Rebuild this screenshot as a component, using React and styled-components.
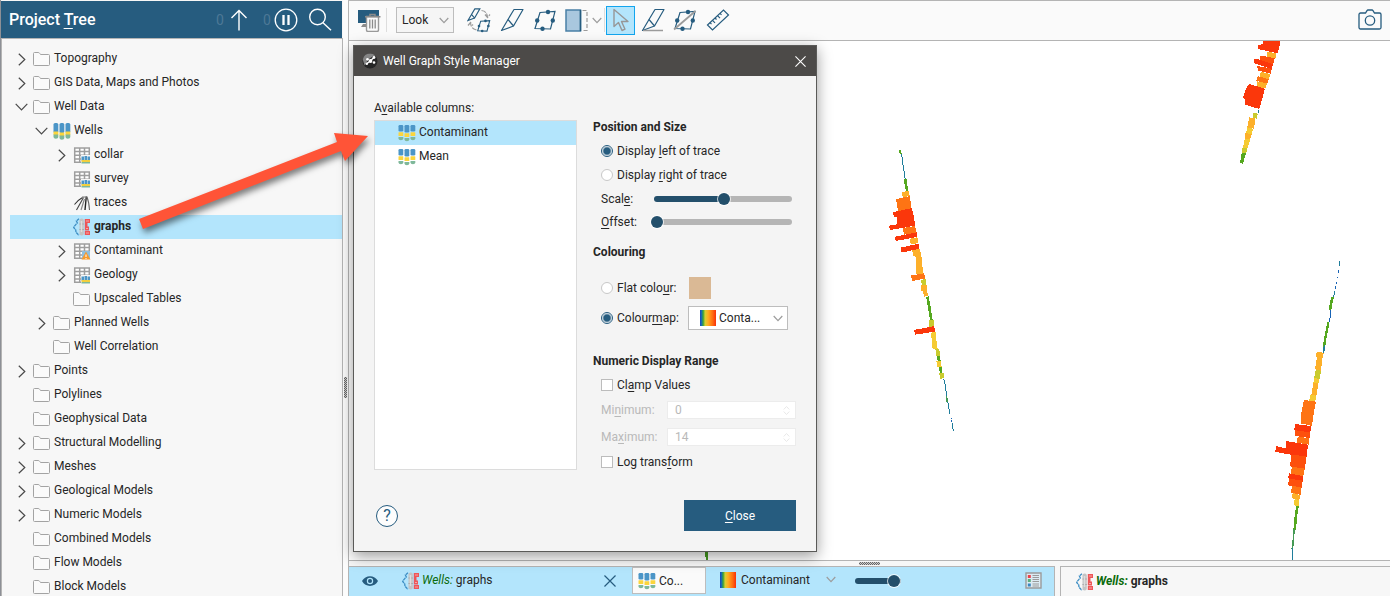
import React from "react";
import styled, { createGlobalStyle, css } from "styled-components";

const navy = "#265c7f";
const sky = "#b3e5fc";
const rule = "#b4b4b4";
const ink = "#262626";

const GlobalStyle = createGlobalStyle`
  * { box-sizing: border-box; }
  body {
    margin: 0;
    overflow: hidden;
    background: #f7f7f7;
    color: ${ink};
    font: 12px/16px Roboto, "Liberation Sans", sans-serif;
  }
  button, input, select { font: inherit; color: inherit; margin: 0; }
  button { padding: 0; border: 0; background: none; }
  u { text-decoration: underline; text-underline-offset: 2px; }
  svg { display: block; flex: none; }
`;

const Window = styled.div`
  position: relative;
  display: flex;
  height: 100vh;
  border-left: 1px solid #8d9096;
`;

/* ---------- project tree ---------- */

const Sidebar = styled.aside`
  flex: none;
  width: 342px;
  padding-top: 1px;
  display: flex;
  flex-direction: column;
`;

const SidebarHeader = styled.header`
  display: flex;
  align-items: center;
  flex: none;
  height: 37px;
  margin-right: 1px;
  padding: 0 10px 0 8px;
  background: ${navy};
  color: #fff;
`;

const SidebarTitle = styled.h1`
  flex: 1;
  margin: 0;
  font-size: 16px;
  line-height: 20px;
  font-weight: 500;
  u { text-underline-offset: 3px; }
`;

const HeaderCount = styled.span`
  width: 11px;
  color: #4d7896;
  font-size: 14px;
  margin-left: ${(p) => p.$gap || 0}px;
`;

const HeaderButton = styled.button`
  display: grid;
  place-items: center;
  height: 24px;
  width: 24px;
  margin-left: ${(p) => p.$gap || 0}px;
`;

const Tree = styled.ul`
  flex: 1;
  min-height: 0;
  margin: 0;
  padding: 8px 0 0 8px;
  list-style: none;
  overflow: hidden;
  background: #f7f7f7;
  border: solid ${rule};
  border-width: 1px 1px 0;
`;

const TreeRow = styled.li`
  display: flex;
  align-items: center;
  height: 24px;
  padding-left: ${(p) => p.$depth * 20}px;
  ${(p) => p.$selected && css`background: ${sky}; font-weight: 700;`}
`;

const Toggle = styled.button`
  flex: none;
  width: 23px;
  height: 24px;
  display: grid;
  place-items: center;
`;

const ToggleSpace = styled.span`
  flex: none;
  width: 23px;
`;

const RowIcon = styled.span`
  flex: none;
  width: 18px;
  margin-right: 3px;
`;

const RowLabel = styled.span`
  padding-bottom: 2px;
  white-space: nowrap;
`;

const Splitter = styled.div`
  flex: none;
  width: 5px;
  display: grid;
  align-content: end;
  justify-content: center;
  padding-bottom: 198px;
  background: #fcfcfc;
`;

const Grip = styled.div`
  width: ${(p) => (p.$vertical ? 3 : 21)}px;
  height: ${(p) => (p.$vertical ? 21 : 3)}px;
  background: repeating-conic-gradient(#666 0 25%, #ccc 0 50%) 0 0 / 2px 2px;
`;

/* ---------- main area ---------- */

const Main = styled.main`
  flex: 1;
  min-width: 0;
  display: flex;
  flex-direction: column;
  border: solid ${rule};
  border-width: 1px 0 0 1px;
`;

const Toolbar = styled.div`
  flex: none;
  display: flex;
  align-items: center;
  height: 40px;
  padding: 0 7px 1px 8px;
  background: #fafafa;
  border-bottom: 1px solid ${rule};
`;

const Tool = styled.button`
  display: grid;
  place-items: center;
  width: ${(p) => p.$width || 29}px;
  height: 29px;
  margin-left: ${(p) => p.$gap || 0}px;
  ${(p) => p.$active && css`background: ${sky}; border: 1px solid #12a5ee;`}
`;

const Divider = styled.span`
  width: 1px;
  height: 24px;
  margin-left: ${(p) => p.$gap || 0}px;
  background: #ddd;
`;

const Spacer = styled.span`
  flex: 1;
`;

const Picker = styled.span`
  display: flex;
  align-items: center;
  flex: none;
  width: ${(p) => p.$width}px;
  height: ${(p) => p.$height || 26}px;
  padding: ${(p) => p.$pad || "0 4px 0 5px"};
  margin-left: ${(p) => p.$gap || 0}px;
  background: ${(p) => p.$bg || "transparent"};
  border: ${(p) => (p.$plain ? "0" : "1px solid #bdbdbd")};
`;

const PickerSelect = styled.select`
  flex: 1;
  min-width: 0;
  height: 22px;
  padding: 0;
  appearance: none;
  border: 0;
  background: none;
  color: ${ink};
  text-align: left;
`;

const PickerField = styled(PickerSelect)`
  margin-left: ${(p) => p.$gap || 3}px;
`;

const Scene = styled.div`
  flex: 1;
  min-height: 0;
  overflow: hidden;
  background: #fff;
`;

const SceneDrawing = styled.svg`
  width: 100%;
  height: 100%;
`;

const BottomSplitter = styled.div`
  flex: none;
  height: 6px;
  border-top: 1px solid ${rule};
  display: grid;
  place-items: center;
`;

const BottomBar = styled.div`
  flex: none;
  display: flex;
  gap: 5px;
  height: 30px;
`;

const ShapeList = styled.div`
  flex: 1;
  min-width: 0;
  display: flex;
  align-items: center;
  padding: 0 12px 2px 12px;
  background: ${sky};
  border: solid ${rule};
  border-width: 1px 1px 0 0;
`;

const ShapeName = styled.span`
  width: ${(p) => p.$width || 186}px;
  padding: 0 0 2px 2px;
  i { color: #0b6b0b; }
`;

const Properties = styled.div`
  flex: none;
  width: 330px;
  display: flex;
  align-items: center;
  padding-left: 15px;
  background: #f7f7f7;
  font-weight: 700;
  border: solid ${rule};
  border-width: 1px 0 0 1px;
`;

const IconButton = styled.button`
  display: grid;
  place-items: center;
  flex: none;
  width: 18px;
  height: 20px;
  margin-left: ${(p) => p.$gap || 0}px;
`;

/* ---------- dialog ---------- */

const Dialog = styled.section`
  position: absolute;
  top: 45px;
  left: 352px;
  width: 464px;
  background: #f4f4f4;
  border: 1px solid #5a5a58;
  box-shadow: 0 4px 14px rgba(0, 0, 0, 0.4);
`;

const DialogBar = styled.header`
  display: flex;
  align-items: center;
  height: 30px;
  padding: 0 10px 0 8px;
  background: #4c4a48;
  color: #fff;
`;

const DialogTitle = styled.h2`
  flex: 1;
  margin: 0 0 0 5px;
  font-size: 12px;
  line-height: 16px;
  font-weight: 400;
`;

const DialogBody = styled.div`
  display: flex;
  gap: 16px;
  padding: 24px 20px 0;
`;

const ColumnsPane = styled.div`
  flex: none;
  width: 203px;
`;

const ColumnsLabel = styled.div`
  height: 20px;
`;

const ColumnList = styled.ul`
  height: 350px;
  margin: 0;
  padding: 0;
  list-style: none;
  background: #fff;
  border: 1px solid #dcdcdc;
`;

const ColumnItem = styled.li`
  display: flex;
  align-items: center;
  height: 24px;
  padding-left: 23px;
  background: ${(p) => (p.$selected ? sky : "transparent")};
`;

const StylePane = styled.div`
  flex: 1;
  padding-top: 15px;
`;

const Heading = styled.h3`
  margin: ${(p) => p.$gap || 0}px 0 0;
  font-size: 12px;
  line-height: 24px;
  font-weight: 700;
`;

const Field = styled.div`
  display: flex;
  align-items: center;
  height: ${(p) => p.$height || 24}px;
  margin-top: ${(p) => p.$gap || 0}px;
  padding-left: 8px;
  color: ${(p) => (p.$disabled ? "#b9b9b9" : ink)};
`;

const FieldLabel = styled.label`
  width: ${(p) => (p.$width ? `${p.$width}px` : "auto")};
`;

const Radio = styled.input.attrs({ type: "radio" })`
  appearance: none;
  flex: none;
  width: 12px;
  height: 12px;
  margin-right: 4px;
  border: 1px solid #c8c8c8;
  border-radius: 50%;
  background: #fff;
  &:checked {
    border-color: ${navy};
    background: radial-gradient(circle, ${navy} 0 3px, #fff 5px);
  }
`;

const Check = styled.input.attrs({ type: "checkbox" })`
  appearance: none;
  flex: none;
  width: 12px;
  height: 12px;
  margin-right: 4px;
  border: 1px solid #bcbcbc;
  background: #fff;
`;

const NumberBox = styled.div`
  display: flex;
  align-items: center;
  width: 129px;
  height: 18px;
  padding: 0 5px 0 7px;
  background: #fff;
  border: 1px solid #ececec;
`;

const NumberInput = styled.input`
  flex: 1;
  min-width: 0;
  padding: 0;
  border: 0;
  background: none;
  &:disabled { color: #b9b9b9; }
`;

const Swatch = styled.button`
  width: 22px;
  height: 22px;
  background: #dab995;
`;

const SliderBox = styled.span`
  position: relative;
  display: flex;
  align-items: center;
  width: ${(p) => p.$width}px;
  height: 16px;
  margin-left: ${(p) => p.$gap || 0}px;
  &::before {
    content: "";
    position: absolute;
    left: 3px;
    right: 0;
    height: 6px;
    border-radius: 3px;
    background: linear-gradient(90deg, #234f6b ${(p) => p.$fill}%, #b5b5b5 0);
  }
`;

const Slider = styled.input.attrs({ type: "range" })`
  position: relative;
  appearance: none;
  width: 100%;
  background: none;
  &::-webkit-slider-thumb {
    appearance: none;
    width: 12px;
    height: 12px;
    border-radius: 50%;
    background: #234f6b;
    box-shadow: 0 0 0 1px rgba(255, 255, 255, 0.75);
  }
`;

const DialogFooter = styled.footer`
  display: flex;
  align-items: center;
  justify-content: space-between;
  padding: 26px 20px 20px 22px;
`;

const CloseButton = styled.button`
  width: 112px;
  height: 31px;
  background: ${navy};
  color: #fff;
`;

const Arrow = styled.svg`
  position: absolute;
  left: 128px;
  top: 120px;
  pointer-events: none;
  filter: drop-shadow(2px 4px 3px rgba(0, 0, 0, 0.5));
`;

/* ---------- icons ---------- */

const Chevron = ({ open }) =>
  open ? (
    <svg width="13" height="8" viewBox="0 0 13 8" fill="none" stroke="#4a4a4a" strokeWidth="1.2">
      <path d="M.7.8 6.5 6.8 12.3.8" />
    </svg>
  ) : (
    <svg width="8" height="13" viewBox="0 0 8 13" fill="none" stroke="#4a4a4a" strokeWidth="1.2">
      <path d="M.8.7 6.8 6.5.8 12.3" />
    </svg>
  );

const DropMark = ({ color = "#9d9d9d" }) => (
  <svg width="10" height="7" viewBox="0 0 10 7" fill="none" stroke={color} strokeWidth="1.2">
    <path d="M.7 1 5 5.6 9.3 1" />
  </svg>
);

const FolderIcon = () => (
  <svg width="18" height="14" viewBox="0 0 18 14" fill="#fafafa" stroke="#a3a3a3">
    <path d="M.5 1.5a1 1 0 0 1 1-1h3.700c.8 0 1.200.4 1.600 1l.7 1h8a1 1 0 0 1 1 1v9a1 1 0 0 1-1 1h-14a1 1 0 0 1-1-1z" />
  </svg>
);

const WellsIcon = () => (
  <svg width="18" height="18" viewBox="0 0 18 18">
    {[0, 6, 12].map((x, i) => (
      <g key={x} transform={`translate(${x} ${i === 1 ? 1 : 0})`}>
        <rect x=".5" y={i === 1 ? 0 : 1} width="4.8" height="10" rx="1.6" fill="#4b95c7" />
        <path d="M.5 9.500h4.800v3.500h-4.800z" fill="#fbd53c" />
        <path d="M.5 12.500h4.800v2.500a2.400 1.700 0 0 1-4.800 0z" fill="#7fb89a" />
      </g>
    ))}
  </svg>
);

const ColumnIcon = () => (
  <svg width="18" height="18" viewBox="0 0 18 18">
    {[0, 6, 12].map((x, i) => (
      <g key={x} transform={`translate(${x} ${i === 1 ? 1 : 0})`}>
        <rect x=".5" y={i === 1 ? 0 : 1} width="4.800" height={i === 1 ? 7.5 : 6.5} rx="1.300" fill="#4b95c7" />
        <rect x=".5" y="8.300" width="4.800" height="3.700" rx=".5" fill="#fbd53c" />
        <path d="M.5 13h4.800v1.500a2.400 1.800 0 0 1-4.800 0z" fill="#7fb89a" />
      </g>
    ))}
  </svg>
);

const TableIcon = ({ warn }) => (
  <svg width="18" height="17" viewBox="-1 0 18 17">
    <path d="M.5.500h15v15H.500z" fill="#fff" />
    <path d="M0 1h16M0 4.500h16M0 8.300h16M0 12h8M0 15.300h8M.700.500v15.300M5.700.500v15.300M10.500.500v8M15.300.500v8" stroke="#9e9e9e" strokeWidth="1.500" fill="none" />
    {warn ? (
      <g>
        <path d="M8 8h8v8H8z" fill="#8ebfe0" />
        <path d="M12 8.500 16.500 16.500H7.500z" fill="#f79a2c" />
        <path d="M12 11.500v2.500M12 15v1" stroke="#fff" />
      </g>
    ) : (
      <g>
        <path d="M7 8h9.500v9H7z" fill="#f7f7f7" />
        <path d="M7.500 9.500H10v4H7.500zM10.500 9H13v4.500h-2.500zM13.500 9.500H16v4h-2.500z" fill="#4b95c7" />
        <path d="M7.500 13H16v2H7.500z" fill="#f3cf3d" />
        <path d="M7.500 15H16v1.500H7.500z" fill="#7fb89a" />
      </g>
    )}
  </svg>
);

const TracesIcon = () => (
  <svg width="18" height="15" viewBox="-1 0 18 15" fill="none">
    <path d="M8.500 1.500Q4 4 .5 8.500" stroke="#333" strokeWidth="1.100" />
    <path d="M9.500 1.500 2.500 14" stroke="#444" strokeWidth="1.100" />
    <path d="M10.500 3 7 14" stroke="#888" strokeWidth="1.200" />
    <path d="M12.300.500 11 14" stroke="#222" strokeWidth="1.400" />
    <path d="M13 1q2 5 2.500 13" stroke="#666" strokeWidth="1.100" />
    <path d="M8 1h5.500" stroke="#777" />
  </svg>
);

const GraphsIcon = () => (
  <svg width="18" height="18" viewBox="0 0 18 18">
    <path d="M6 .700 3.300 3l1 1.800L1.500 8l-.8 1.500 2 2.300.3 2.500 3 3" fill="none" stroke="#3d8ec4" strokeWidth="1.300" strokeDasharray="3 .5" />
    <rect x="6.500" y=".500" width="4.300" height="17" rx="2" fill="#c4c4c4" />
    <path d="M6.500 6h4.300M6.500 11.500h4.300" stroke="#999" strokeWidth=".8" />
    <path d="M8.500 3v11" stroke="#dedede" strokeWidth="1.500" />
    <path d="M11.800 1h5.200v4h-5.200zM11.800 5h2.700v3.500h-2.700zM11.800 8.500h4.200v4h-4.200zM11.800 13h5.200v4h-5.200z" fill="#ee5658" />
    <path d="M13 3h3M13 10.500h2M13 15h3" stroke="#f7a5a5" />
  </svg>
);

const MapSwatch = () => (
  <svg width="16" height="16" viewBox="0 0 16 16">
    <defs>
      <linearGradient id="rainbow">
        <stop offset="0" stopColor="#1242c8" />
        <stop offset=".1" stopColor="#1b6fa8" />
        <stop offset=".2" stopColor="#3fa535" />
        <stop offset=".32" stopColor="#d8cf35" />
        <stop offset=".5" stopColor="#ffad20" />
        <stop offset=".8" stopColor="#ff6a10" />
        <stop offset="1" stopColor="#f8300a" />
      </linearGradient>
    </defs>
    <path d="M0 0h16v16H0z" fill="url(#rainbow)" />
  </svg>
);

const UpIcon = () => (
  <svg width="18" height="22" viewBox="0 0 18 22" fill="none" stroke="#fff" strokeWidth="1.400">
    <path d="M9 21.500V1.500M1.500 9l7.500-7.500L16.500 9" />
  </svg>
);

const PauseIcon = () => (
  <svg width="24" height="24" viewBox="0 0 24 24" fill="none" stroke="#fff">
    <circle cx="12" cy="12" r="10.800" strokeWidth="1.300" />
    <path d="M9.500 7v10M14.500 7v10" strokeWidth="2.300" />
  </svg>
);

const SearchIcon = () => (
  <svg width="24" height="24" viewBox="0 0 24 24" fill="none" stroke="#fff" strokeWidth="1.400">
    <circle cx="9.500" cy="9" r="7.800" />
    <path d="m15 14.800 8 7.500" />
  </svg>
);

const ClearSceneIcon = () => (
  <svg width="24" height="24" viewBox="0 0 24 24" fill="none">
    <path d="M1 2h21v13H1z" fill={navy} />
    <path d="M6 16h6v3H4z" fill="#8b8b8b" />
    <path d="M9.500 8.500h12V22a1.500 1.500 0 0 1-1.500 1.500h-9A1.500 1.500 0 0 1 9.500 22z" fill="#fafafa" stroke="#999" strokeWidth="1.400" />
    <path d="M8 8.800h15.500M13 8.500V6.500h5v2" stroke="#8b8b8b" strokeWidth="1.500" />
    <path d="M12.800 11.500v9M15.500 11.500v9M18.200 11.500v9" stroke="#8b8b8b" strokeWidth="1.300" />
  </svg>
);

const BladeShape = () => (
  <path d="M14 1.500H23L13.500 18 8 11.500zM8 11.500 1.500 22.500 13.500 18" />
);

const SlicerIcon = () => (
  <svg width="24" height="24" viewBox="0 0 24 24" fill="none" stroke={navy} strokeWidth="1.200" strokeLinejoin="round">
    <BladeShape />
  </svg>
);

const SlicerLineIcon = () => (
  <svg width="24" height="24" viewBox="0 0 24 24" fill="none" stroke={navy} strokeWidth="1.200" strokeLinejoin="round">
    <BladeShape />
    <path d="M2 22.500h20" stroke="#9b9b9b" strokeWidth="1.500" />
  </svg>
);

const LoopShape = () => (
  <>
    <path d="M7 4.500 22 3.500 17.500 21 2 20.500z" />
    <g fill={navy} stroke="none">
      <circle cx="15" cy="4" r="2.200" />
      <circle cx="4.200" cy="12.500" r="2.200" />
      <circle cx="19.800" cy="12.500" r="2.200" />
      <circle cx="9.500" cy="20.800" r="2.200" />
    </g>
  </>
);

const LoopIcon = ({ struck }) => (
  <svg width="24" height="24" viewBox="0 0 24 24" fill="none" stroke={navy} strokeWidth="1.200">
    <LoopShape />
    {struck && <path d="M1 21.500 22.500 3" stroke="#9b9b9b" strokeWidth="1.800" />}
  </svg>
);

const SwapIcon = () => (
  <svg width="25" height="25" viewBox="0 0 25 25" fill="none" stroke={navy}>
    <g transform="scale(.56)" strokeWidth="2"><BladeShape /></g>
    <g transform="translate(9.500 10.500) scale(.6)" strokeWidth="1.800"><LoopShape /></g>
    <g stroke="#9b9b9b" strokeWidth="1.200">
      <path d="M14.500 2.500q5 .5 6 6M18 6.500l2.500 3 2.500-3" strokeDasharray="5 1" />
      <path d="M9.500 22c-4-1-5.500-3-6-7M1 17.500l2.500-3 2.500 3" strokeDasharray="5 1.500" />
    </g>
  </svg>
);

const SliceModeIcon = () => (
  <svg width="24" height="23" viewBox="0 0 24 23" fill="none">
    <path d="M1 1h14.500v21H1z" fill="#a9c7de" stroke="#4a80a6" strokeWidth="1.500" />
    <path d="M15.500 1v21" stroke={navy} strokeWidth="1.500" />
    <path d="M17.500 1.500h4.500v20h-4.500" stroke="#9b9b9b" strokeWidth="1.200" strokeDasharray="4 2" />
  </svg>
);

const PointerIcon = () => (
  <svg width="18" height="24" viewBox="0 0 18 24" fill="none" stroke="#979797" strokeWidth="1.400" strokeLinejoin="round">
    <path d="M2 1.500v17l4.500-4 3.500 8 3-1.300-3.500-7.700H16z" />
  </svg>
);

const RulerIcon = () => (
  <svg width="24" height="24" viewBox="0 0 24 24" fill="none" stroke={navy} strokeWidth="1.200">
    <path d="M1.500 17 17.500 2l5 5L6.500 22z" />
    <path d="m4 14.600 1.500 1.500M6.500 12.300l2.500 2.500M9 10l1.500 1.500M11.500 7.600l2.500 2.500M14 5.300l1.500 1.500" />
  </svg>
);

const CameraIcon = () => (
  <svg width="24" height="22" viewBox="0 0 24 22" fill="none" stroke={navy} strokeWidth="1.300">
    <path d="M2.500 4h5L9 1.700c.2-.400.500-.700 1-.700h4c.500 0 .800.300 1 .700L16.500 4h5c.800 0 1.500.700 1.500 1.500v13c0 .800-.700 1.500-1.500 1.500h-19C1.700 20 1 19.300 1 18.500v-13C1 4.700 1.700 4 2.500 4z" />
    <circle cx="12" cy="11.500" r="4.700" />
  </svg>
);

const AppIcon = () => (
  <svg width="16" height="16" viewBox="0 0 16 16">
    <circle cx="8" cy="8" r="7.500" fill="#262626" />
    <path d="M.8 6.500a7.500 7.500 0 0 1 12.500-4Q7 4 2.500 12.500Z" fill="#858585" />
    <path d="m5 10.500 2.500-2 4.500-4" stroke="#fff" strokeWidth="1.400" />
    <g fill="#fff">
      <circle cx="5.500" cy="6.300" r="1.300" />
      <circle cx="12" cy="4.500" r="1.400" />
      <circle cx="8.500" cy="8" r="1.900" />
      <circle cx="12" cy="9.500" r="1.300" />
      <circle cx="4.800" cy="10.800" r="1.300" />
    </g>
  </svg>
);

const CrossIcon = ({ color = "#fff", size = 10 }) => (
  <svg width={size} height={size} viewBox="0 0 10 10" fill="none" stroke={color}>
    <path d="m.4.400 9.200 9.200M9.600.400.400 9.600" />
  </svg>
);

const HelpRing = styled.button`
  width: 22px;
  height: 22px;
  border: 1px solid ${navy};
  border-radius: 50%;
  background: #fdfdfd;
  color: ${navy};
  font-size: 16px;
  line-height: 20px;
  text-align: center;
`;

const EyeIcon = () => (
  <svg width="16" height="12" viewBox="0 0 16 12">
    <path d="M0 6c3.500-6.500 12.500-6.500 16 0-3.500 6.500-12.500 6.500-16 0z" fill={navy} />
    <circle cx="8" cy="6" r="3.200" fill={sky} />
    <circle cx="8" cy="6" r="2" fill={navy} />
  </svg>
);

const LegendIcon = () => (
  <svg width="17" height="17" viewBox="0 0 17 17" fill="none">
    <path d="M1 1h15v15H1z" fill="#dcebf3" stroke="#9b9b9b" strokeWidth="1.400" />
    <path d="M2.800 3h3v3h-3z" fill="#ee4048" />
    <path d="M2.800 7h3v3h-3z" fill="#5cae7f" />
    <path d="M2.800 11.500h3v3h-3z" fill="#3a86c0" />
    <path d="M7.500 3.500H14M7.500 5.500H14M7.500 7.500H14M7.500 9.500H14M7.500 12H14M7.500 14H14" stroke="#9b9b9b" />
  </svg>
);

const SpinMark = () => (
  <svg width="7" height="9" viewBox="0 0 7 9" fill="none" stroke="#e8e8e8">
    <path d="m.7 3.500 2.800-3 2.800 3M.7 5.500l2.800 3 2.800-3" />
  </svg>
);

/* ---------- well traces ---------- */

const red = "#fb370b";
const flame = "#fd500d";
const orange = "#fe7414";
const amber = "#fdb02a";
const gold = "#f5cb33";
const lime = "#c9cb2e";
const green = "#55a81f";
const moss = "#459a55";
const teal = "#1f7d9b";
const blue = "#1763b5";

/* Each well: bars as [colour, points] and trace pieces as [colour, width, points], at three units to the pixel. */
const wells = [
  {
    origin: [860, 140],
    lines: [
      [green, 6, "119,30 122,42"],
      [teal, 3, "124,42 127,56 128,70 131,88 134,105 136,120"],
      [green, 8, "136,118 138,135 142,152"],
      [green, 8, "202,470 206,490 210,515 214,540"],
      [green, 8, "240,680 244,698"],
      [teal, 3, "251,716 257,740 259,768 264,790 270,822"],
      [moss, 5, "259,768 262,785"],
      [blue, 3, "274,834 274,837"],
      [blue, 3, "274,841 274,846"],
      [teal, 3, "277,850 278,866 281,872"],
    ],
    bars: [
      [amber, "126,157 146,152 149,168 128,172"],
      [orange, "108,178 149,168 155,206 114,213"],
      [red, "98,217 156,204 159,222 104,233"],
      [red, "110,230 160,220 164,256 112,262"],
      [red, "87,257 165,244 166,257 90,270"],
      [orange, "128,264 166,258 168,278 132,284"],
      [red, "105,290 170,277 171,291 107,303"],
      [amber, "149,296 172,292 175,310 152,312"],
      [amber, "156,330 179,326 184,345 188,385 168,390 167,350 160,348"],
      [red, "122,323 176,311 178,326 125,338"],
      [amber, "168,385 188,382 190,402 168,402"],
      [orange, "153,406 193,400 195,416 157,423"],
      [lime, "183,420 197,417 197,436 186,436"],
      [amber, "184,436 200,434 201,450 204,468 192,470 189,454 184,452"],
      [lime, "208,540 221,540 221,560 208,560"],
      [gold, "213,578 228,576 229,600 233,628 218,628"],
      [red, "162,570 223,558 225,575 165,584"],
      [lime, "226,628 238,628 240,650 230,650"],
      [green, "230,648 240,648 242,662 233,662"],
      [gold, "229,664 243,662 245,682 232,682"],
      [lime, "238,700 251,698 251,715 240,716"],
    ],
  },
  {
    origin: [1220, 0],
    lines: [[teal, 3, "116,330 116,338"]],
    bars: [
      [red, "128,120 180,120 180,135 172,160 114,147 114,137 128,131"],
      [amber, "141,155 169,160 166,178 142,170"],
      [flame, "122,166 164,175 160,192 119,182"],
      [flame, "112,198 156,206 152,221 113,211"],
      [red, "102,178 112,177 159,192 156,207 102,190"],
      [amber, "122,215 151,222 146,240 120,232"],
      [orange, "113,228 146,238 142,252 109,242"],
      [amber, "111,244 142,250 136,266 110,260"],
      [red, "88,252 135,266 127,295 118,327 75,314 76,300 69,292 80,262"],
      [lime, "100,339 114,341 110,356 98,354"],
      [amber, "88,352 106,355 102,386 82,382"],
      [gold, "82,382 99,386 96,402 78,400"],
      [amber, "75,399 95,402 91,416 75,416"],
      [gold, "74,416 91,416 83,445 69,445"],
      [lime, "67,445 82,445 79,460 66,460"],
      [green, "65,460 78,460 69,491 60,490"],
    ],
  },
  {
    origin: [1250, 250],
    lines: [
      [teal, 3, "269,33 269,48"],
      [blue, 3, "265,60 265,69"],
      [blue, 3, "262,81 262,84"],
      [blue, 3, "259,96 259,102"],
      [blue, 3, "256,108 256,117"],
      [teal, 3, "254,122 250,146"],
      [green, 8, "248,141 243,162 240,180"],
      [blue, 3, "243,180 241,200 238,215"],
      [green, 7, "235,215 231,240 226,265 222,290"],
      [teal, 4, "223,285 221,308"],
      [green, 8, "143,766 138,795 134,840"],
      [moss, 5, "132,838 130,870 127,896"],
      [teal, 3, "127,895 127,930"],
    ],
    bars: [
      [amber, "200,306 221,308 219,324 198,322"],
      [amber, "201,322 217,324 213,362 195,358"],
      [lime, "197,360 213,362 209,388 192,384"],
      [gold, "192,384 208,387 205,402 190,400"],
      [amber, "190,398 205,400 199,438 184,436"],
      [gold, "180,434 199,437 196,454 178,452"],
      [orange, "162,450 198,455 192,485 186,528 152,520 154,490 159,465"],
      [red, "136,522 184,528 181,547 132,541"],
      [flame, "136,541 181,547 179,564 135,558"],
      [orange, "143,561 178,564 176,584 140,578"],
      [red, "108,573 174,584 170,620 108,612 90,608 76,605 78,588 108,595"],
      [flame, "124,614 169,619 165,658 120,649"],
      [orange, "126,650 164,656 160,678 122,672"],
      [red, "117,670 159,678 158,692 114,685"],
      [flame, "117,686 158,692 155,713 114,706"],
      [orange, "126,708 154,712 152,735 123,728"],
      [amber, "128,729 150,735 148,750 126,745"],
      [gold, "134,747 148,750 146,769 132,766"],
    ],
  },
];

const WellScene = () => (
  <SceneDrawing viewBox="349 41 1041 519" preserveAspectRatio="xMinYMin slice" shapeRendering="crispEdges">
    {wells.map(({ origin, lines, bars }) => (
      <g key={origin[0]} transform={`translate(${origin[0]} ${origin[1]}) scale(.33333)`}>
        {lines.map(([stroke, width, points]) => (
          <polyline key={points} points={points} stroke={stroke} strokeWidth={width} fill="none" />
        ))}
        {bars.map(([fill, points]) => (
          <polygon key={points} points={points} fill={fill} />
        ))}
      </g>
    ))}
    <path d="M705 540h3v20h-2v-3h-1z" fill="#459a1f" />
  </SceneDrawing>
);

/* ---------- tree data: label, depth, expansion, icon ---------- */

const treeItems = [
  ["Topography", 0, "closed"],
  ["GIS Data, Maps and Photos", 0, "closed"],
  ["Well Data", 0, "open"],
  ["Wells", 1, "open", <WellsIcon />],
  ["collar", 2, "closed", <TableIcon />],
  ["survey", 2, null, <TableIcon />],
  ["traces", 2, null, <TracesIcon />],
  ["graphs", 2, null, <GraphsIcon />],
  ["Contaminant", 2, "closed", <TableIcon warn />],
  ["Geology", 2, "closed", <TableIcon />],
  ["Upscaled Tables", 2, null],
  ["Planned Wells", 1, "closed"],
  ["Well Correlation", 1, null],
  ["Points", 0, "closed"],
  ["Polylines", 0, null],
  ["Geophysical Data", 0, null],
  ["Structural Modelling", 0, "closed"],
  ["Meshes", 0, "closed"],
  ["Geological Models", 0, "closed"],
  ["Numeric Models", 0, "closed"],
  ["Combined Models", 0, null],
  ["Flow Models", 0, null],
  ["Block Models", 0, null],
];

const ProjectTree = () => (
  <Sidebar>
    <SidebarHeader>
      <SidebarTitle>Project <u>T</u>ree</SidebarTitle>
      <HeaderCount>0</HeaderCount>
      <HeaderButton aria-label="Uploads"><UpIcon /></HeaderButton>
      <HeaderCount $gap={12}>0</HeaderCount>
      <HeaderButton aria-label="Pause"><PauseIcon /></HeaderButton>
      <HeaderButton $gap={10} aria-label="Search"><SearchIcon /></HeaderButton>
    </SidebarHeader>
    <Tree>
      {treeItems.map(([label, depth, state, icon]) => (
        <TreeRow key={label} $depth={depth} $selected={label === "graphs"}>
          {state ? (
            <Toggle aria-label={`Toggle ${label}`}><Chevron open={state === "open"} /></Toggle>
          ) : (
            <ToggleSpace />
          )}
          <RowIcon>{icon || <FolderIcon />}</RowIcon>
          <RowLabel>{label}</RowLabel>
        </TreeRow>
      ))}
    </Tree>
  </Sidebar>
);

const SceneToolbar = () => (
  <Toolbar>
    <Tool $width={24} aria-label="Clear scene"><ClearSceneIcon /></Tool>
    <Divider $gap={5} />
    <Picker $width={58} $gap={9} $bg="#f5f5f5">
      <PickerSelect aria-label="Look"><option>Look</option></PickerSelect>
      <DropMark />
    </Picker>
    <Tool $gap={11} aria-label="Swap slicer"><SwapIcon /></Tool>
    <Tool $gap={3} aria-label="Slicer"><SlicerIcon /></Tool>
    <Tool $gap={4} aria-label="Polyline"><LoopIcon /></Tool>
    <Tool $gap={3} aria-label="Slice mode"><SliceModeIcon /></Tool>
    <Tool $width={12} aria-label="Slice options"><DropMark /></Tool>
    <Divider $gap={1} />
    <Tool $active $gap={1} aria-label="Select"><PointerIcon /></Tool>
    <Tool $gap={3} aria-label="Draw slicer line"><SlicerLineIcon /></Tool>
    <Tool $gap={3} aria-label="Draw polyline"><LoopIcon struck /></Tool>
    <Tool $gap={4} aria-label="Ruler"><RulerIcon /></Tool>
    <Spacer />
    <Tool $width={26} aria-label="Take screenshot"><CameraIcon /></Tool>
  </Toolbar>
);

const SceneFooter = () => (
  <BottomBar>
    <ShapeList>
      <IconButton aria-label="Visibility"><EyeIcon /></IconButton>
      <IconButton $gap={23} aria-label="Graphs"><GraphsIcon /></IconButton>
      <ShapeName $width={181}><i>Wells:</i> graphs</ShapeName>
      <IconButton aria-label="Remove"><CrossIcon color={navy} size={12} /></IconButton>
      <Picker $width={74} $height={27} $gap={13} $bg="#fafafa">
        <ColumnIcon />
        <PickerField as="button" aria-label="Column">Co...</PickerField>
      </Picker>
      <Picker $plain $width={116} $gap={14} $pad="0 0 2px 0">
        <MapSwatch />
        <PickerField $gap={5} aria-label="Colour map"><option>Contaminant</option></PickerField>
        <DropMark />
      </Picker>
      <SliderBox $width={49} $fill={100} $gap={16}>
        <Slider aria-label="Opacity" defaultValue={96} />
      </SliderBox>
      <Spacer />
      <IconButton aria-label="Legend"><LegendIcon /></IconButton>
    </ShapeList>
    <Properties>
      <GraphsIcon />
      <ShapeName><i>Wells:</i> graphs</ShapeName>
    </Properties>
  </BottomBar>
);

const StyleManager = () => (
  <Dialog role="dialog" aria-labelledby="dialog-title">
    <DialogBar>
      <AppIcon />
      <DialogTitle id="dialog-title">Well Graph Style Manager</DialogTitle>
      <button aria-label="Close dialog"><CrossIcon size={11} /></button>
    </DialogBar>
    <DialogBody>
      <ColumnsPane>
        <ColumnsLabel id="columns-label">A<u>v</u>ailable columns:</ColumnsLabel>
        <ColumnList aria-labelledby="columns-label">
          <ColumnItem $selected><RowIcon><ColumnIcon /></RowIcon><RowLabel>Contaminant</RowLabel></ColumnItem>
          <ColumnItem><RowIcon><ColumnIcon /></RowIcon><RowLabel>Mean</RowLabel></ColumnItem>
        </ColumnList>
      </ColumnsPane>
      <StylePane>
        <Heading>Position and Size</Heading>
        <Field>
          <Radio id="left" name="side" defaultChecked />
          <FieldLabel htmlFor="left">Display <u>l</u>eft of trace</FieldLabel>
        </Field>
        <Field>
          <Radio id="right" name="side" />
          <FieldLabel htmlFor="right">Display <u>r</u>ight of trace</FieldLabel>
        </Field>
        <Field $height={23}>
          <FieldLabel $width={50} htmlFor="scale">Scal<u>e</u>:</FieldLabel>
          <SliderBox $width={141} $fill={51}><Slider id="scale" defaultValue={52} /></SliderBox>
        </Field>
        <Field $height={23}>
          <FieldLabel $width={50} htmlFor="offset"><u>O</u>ffset:</FieldLabel>
          <SliderBox $width={141} $fill={0}><Slider id="offset" defaultValue={0} /></SliderBox>
        </Field>
        <Heading $gap={7}>Colouring</Heading>
        <Field $gap={12}>
          <Radio id="flat" name="colouring" />
          <FieldLabel $width={72} htmlFor="flat">Flat colo<u>u</u>r:</FieldLabel>
          <Swatch aria-label="Flat colour" />
        </Field>
        <Field $gap={6}>
          <Radio id="map" name="colouring" defaultChecked />
          <FieldLabel $width={71} htmlFor="map">Colour<u>m</u>ap:</FieldLabel>
          <Picker $width={100} $height={24} $pad="0 4px 0 11px" $bg="#fff">
            <MapSwatch />
            <PickerField aria-label="Colourmap"><option>Conta...</option></PickerField>
            <DropMark />
          </Picker>
        </Field>
        <Heading $gap={19}>Numeric Display Range</Heading>
        <Field>
          <Check id="clamp" />
          <FieldLabel htmlFor="clamp">Cl<u>a</u>mp Values</FieldLabel>
        </Field>
        <Field $height={26} $disabled>
          <FieldLabel $width={66} htmlFor="min">Mi<u>n</u>imum:</FieldLabel>
          <NumberBox><NumberInput id="min" defaultValue="0" disabled /><SpinMark /></NumberBox>
        </Field>
        <Field $height={26} $gap={1} $disabled>
          <FieldLabel $width={66} htmlFor="max">Ma<u>x</u>imum:</FieldLabel>
          <NumberBox><NumberInput id="max" defaultValue="14" disabled /><SpinMark /></NumberBox>
        </Field>
        <Field>
          <Check id="log" />
          <FieldLabel htmlFor="log">Log trans<u>f</u>orm</FieldLabel>
        </Field>
      </StylePane>
    </DialogBody>
    <DialogFooter>
      <HelpRing aria-label="Help">?</HelpRing>
      <CloseButton><u>C</u>lose</CloseButton>
    </DialogFooter>
  </Dialog>
);

export default function App() {
  return (
    <Window>
      <GlobalStyle />
      <ProjectTree />
      <Splitter><Grip $vertical /></Splitter>
      <Main>
        <SceneToolbar />
        <Scene><WellScene /></Scene>
        <BottomSplitter><Grip /></BottomSplitter>
        <SceneFooter />
      </Main>
      <StyleManager />
      <Arrow width="250" height="125" viewBox="130 120 250 125">
        <path d="M140 219 338 142 335 133 369 136 346 161 342 151 144 229z" fill="#ff5437" />
      </Arrow>
    </Window>
  );
}
